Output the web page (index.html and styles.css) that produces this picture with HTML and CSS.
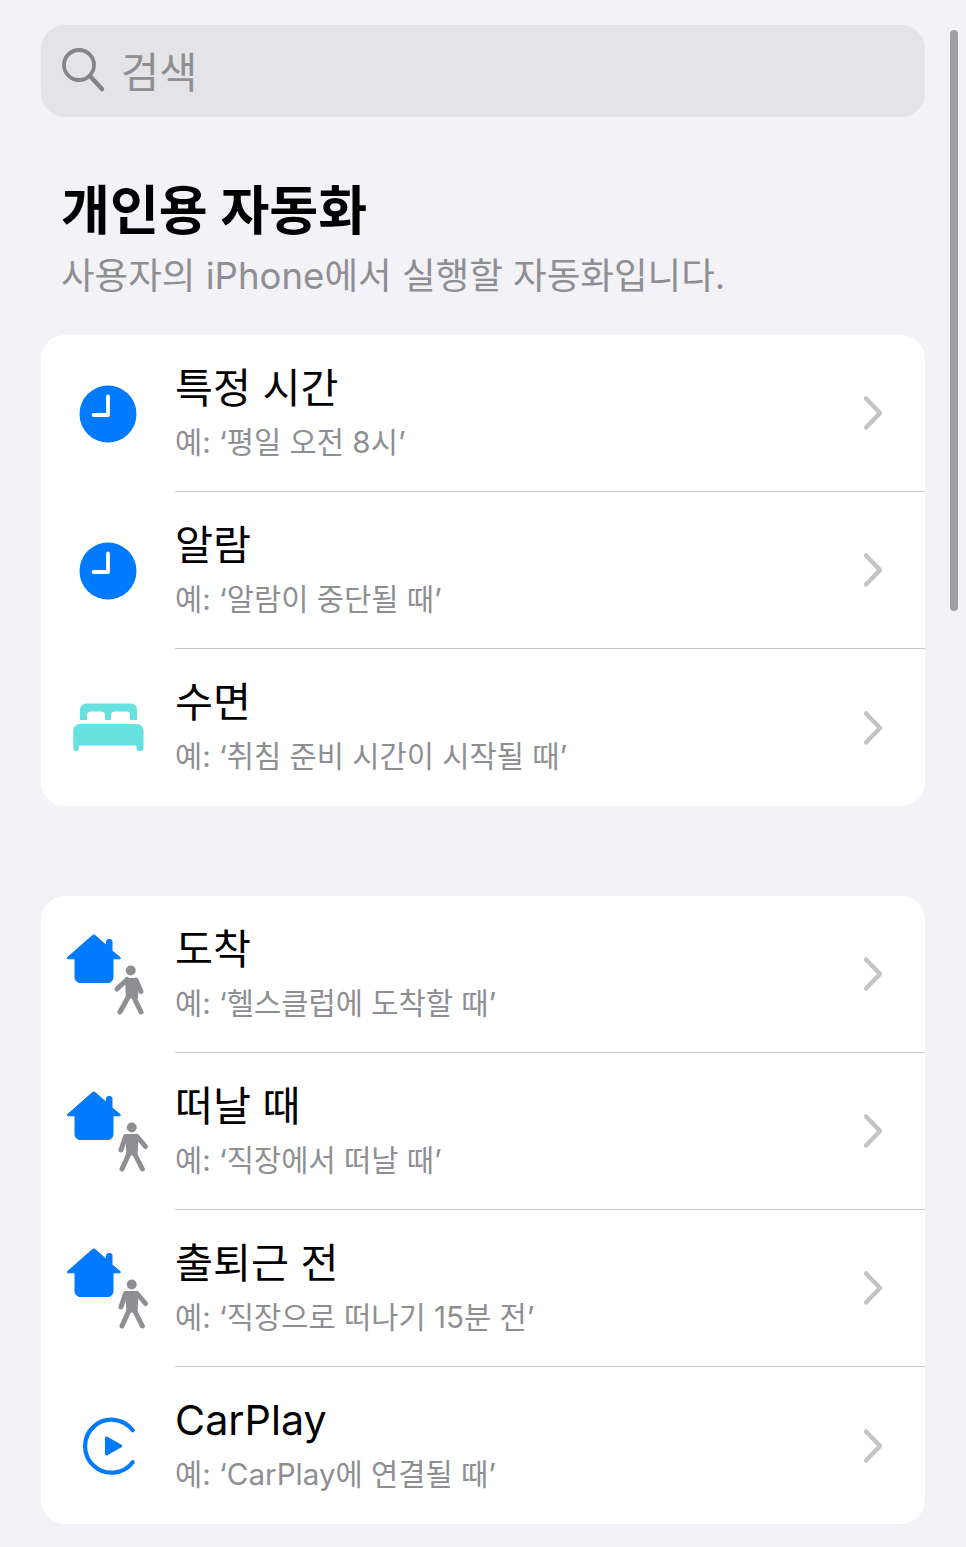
FILE: index.html
```html
<!DOCTYPE html>
<html lang="ko">

<head>
    <meta charset="UTF-8">
    <title>개인용 자동화</title>
    <link rel="stylesheet" href="styles.css">
</head>

<body>

    <svg class="sprites" width="0" height="0">
        <symbol id="clock" viewBox="78 384 60 60">
            <circle cx="108" cy="414" r="28.500" fill="#007aff" />
            <path d="M108 396.500V415H93.500" fill="none" stroke="#fff" stroke-width="3.800" stroke-linecap="round" stroke-linejoin="round" />
        </symbol>
        <symbol id="house" viewBox="63 929.500 90 90">
            <path d="M93.800 934.500a2 2 0 0 1 1.400.6L106.500 945V941a2 2 0 0 1 2-2h1.500a2 2 0 0 1 2 2v9.200l8.200 6.800v1.300h-7.200V977a5 5 0 0 1-5 5H80a5 5 0 0 1-5-5v-18.700H67.500V957L92.400 935.100a2 2 0 0 1 1.400-.6Z" fill="#007aff" stroke="#007aff" stroke-width="1" stroke-linejoin="round" />
        </symbol>
        <symbol id="walk-a" viewBox="63 929.500 90 90">
            <circle cx="130.700" cy="970" r="5" fill="#8e8e93" />
            <path d="M125.500 977.500H135.500Q138 977.500 138.800 980L138 998H126L125 980Z" fill="#8e8e93" />
            <path d="M127 979 117 988.500M136 979.500 141 991M128.500 996 120 1011.500M133.500 996 141 1011.500" fill="none" stroke="#8e8e93" stroke-width="5" stroke-linecap="round" stroke-linejoin="round" />
        </symbol>
        <symbol id="walk-b" viewBox="63 929.500 90 90">
            <circle cx="131.700" cy="970" r="5" fill="#8e8e93" />
            <path d="M125 976.500H136.500L138.500 980 137.500 998H126.500Z" fill="#8e8e93" />
            <path d="M125.500 979 121 992.500M137 979 145.500 989M129 996 122 1011.500M134.500 996 142.300 1011.500" fill="none" stroke="#8e8e93" stroke-width="5" stroke-linecap="round" stroke-linejoin="round" />
        </symbol>
        <symbol id="chevron" viewBox="0 0 24 36">
            <path d="M4 3.500 18 18 4 32.500" fill="none" stroke="#c4c4c7" stroke-width="4.500" stroke-linecap="round" stroke-linejoin="round" />
        </symbol>
    </svg>

    <div class="scrollbar"></div>

    <div class="search">
        <svg class="search-icon" viewBox="0 0 44 46">
            <circle cx="17" cy="17" r="15" fill="none" stroke="#858589" stroke-width="3.800" />
            <path d="M28 28 40 41" fill="none" stroke="#858589" stroke-width="4.500" stroke-linecap="round" />
        </svg>
        <span class="search-text">검색</span>
    </div>

    <div class="header">
        <h1>개인용 자동화</h1>
        <p>사용자의 iPhone에서 실행할 자동화입니다.</p>
    </div>

    <!-- 시간 / 수면 -->
    <div class="card">
        <div class="row">
            <div class="icon"><svg class="ic" viewBox="0 0 60 60"><use href="#clock" /></svg></div>
            <div class="row-body">
                <div class="texts">
                    <div class="row-title">특정 시간</div>
                    <div class="row-sub">예: ‘평일 오전 8시’</div>
                </div>
                <svg class="chevron"><use href="#chevron" /></svg>
            </div>
        </div>
        <div class="row">
            <div class="icon"><svg class="ic" viewBox="0 0 60 60"><use href="#clock" /></svg></div>
            <div class="row-body">
                <div class="texts">
                    <div class="row-title">알람</div>
                    <div class="row-sub">예: ‘알람이 중단될 때’</div>
                </div>
                <svg class="chevron"><use href="#chevron" /></svg>
            </div>
        </div>
        <div class="row">
            <div class="icon">
                <svg class="ic-bed" viewBox="73 703 71 49">
                    <path d="M85 703.500h46a6 6 0 0 1 6 6v10.500h-7v-5a3.500 3.500 0 0 0-3.500-3.500h-12a3.500 3.500 0 0 0-3.500 3.500v5h-6v-5a3.500 3.500 0 0 0-3.500-3.500h-11a3.500 3.500 0 0 0-3.500 3.500v5h-7v-10.500a6 6 0 0 1 6-6Z" fill="#67e0e0" />
                    <path d="M80 724h57a6.500 6.500 0 0 1 6.500 6.500V748a3 3 0 0 1-3 3h-1a3 3 0 0 1-3-3v-2.500H79v2.500a3 3 0 0 1-3 3h-.2a2.500 2.500 0 0 1-2.500-2.500V730.500A6.500 6.500 0 0 1 80 724Z" fill="#67e0e0" />
                </svg>
            </div>
            <div class="row-body last">
                <div class="texts">
                    <div class="row-title">수면</div>
                    <div class="row-sub">예: ‘취침 준비 시간이 시작될 때’</div>
                </div>
                <svg class="chevron"><use href="#chevron" /></svg>
            </div>
        </div>
    </div>

    <!-- 위치 / CarPlay -->
    <div class="card second">
        <div class="row">
            <div class="icon">
                <svg class="ic-place" viewBox="0 0 90 90">
                    <use href="#house" />
                    <use href="#walk-a" />
                </svg>
            </div>
            <div class="row-body">
                <div class="texts">
                    <div class="row-title">도착</div>
                    <div class="row-sub">예: ‘헬스클럽에 도착할 때’</div>
                </div>
                <svg class="chevron"><use href="#chevron" /></svg>
            </div>
        </div>
        <div class="row">
            <div class="icon">
                <svg class="ic-place" viewBox="0 0 90 90">
                    <use href="#house" />
                    <use href="#walk-b" />
                </svg>
            </div>
            <div class="row-body">
                <div class="texts">
                    <div class="row-title">떠날 때</div>
                    <div class="row-sub">예: ‘직장에서 떠날 때’</div>
                </div>
                <svg class="chevron"><use href="#chevron" /></svg>
            </div>
        </div>
        <div class="row">
            <div class="icon">
                <svg class="ic-place" viewBox="0 0 90 90">
                    <use href="#house" />
                    <use href="#walk-b" />
                </svg>
            </div>
            <div class="row-body">
                <div class="texts">
                    <div class="row-title">출퇴근 전</div>
                    <div class="row-sub">예: ‘직장으로 떠나기 15분 전’</div>
                </div>
                <svg class="chevron"><use href="#chevron" /></svg>
            </div>
        </div>
        <div class="row">
            <div class="icon">
                <svg class="ic" viewBox="78 1416.500 60 60">
                    <path d="M132.700 1430.700A26.500 26.500 0 1 0 132.700 1462.700" fill="none" stroke="#007aff" stroke-width="4.200" stroke-linecap="round" />
                    <path d="M105 1438.500a1.500 1.500 0 0 1 2.300-1.300L121.500 1445.200a1.500 1.500 0 0 1 0 2.600L107.300 1455.800a1.500 1.500 0 0 1-2.300-1.300Z" fill="#007aff" />
                </svg>
            </div>
            <div class="row-body last">
                <div class="texts">
                    <div class="row-title">CarPlay</div>
                    <div class="row-sub">예: ‘CarPlay에 연결될 때’</div>
                </div>
                <svg class="chevron"><use href="#chevron" /></svg>
            </div>
        </div>
    </div>

</body>

</html>
```

FILE: styles.css
```css
html,
body {
    height: 1547px;
    overflow: hidden;
}

body {
    position: relative;
    margin: 0;
    padding: 25px 41px 0 41px;
    box-sizing: border-box;
    background-color: #f2f2f7;
    font-family: Inter, "Noto Sans CJK KR", sans-serif;
    color: #000;
}

.sprites {
    position: absolute;
}

.scrollbar {
    position: absolute;
    left: 950px;
    top: 30px;
    width: 8px;
    height: 581px;
    border-radius: 4px;
    background-color: #a0a0a3;
}

.search {
    display: flex;
    align-items: center;
    height: 92px;
    padding-left: 21px;
    border-radius: 24px;
    background-color: #e3e3e8;
}

.search-icon {
    width: 44px;
    height: 46px;
}

.search-text {
    margin-left: 15px;
    padding-top: 3px;
    font-size: 41.500px;
    line-height: 50px;
    color: #8e8e93;
}

.header {
    height: 218px;
    padding: 62px 0 0 20px;
    box-sizing: border-box;
}

h1 {
    margin: 0;
    font-size: 53.200px;
    line-height: 64px;
    font-weight: 700;
}

.header p {
    margin: 10px 0 0;
    font-size: 36.550px;
    line-height: 46px;
    color: #8e8e93;
}

.card {
    border-radius: 24px;
    background-color: #fff;
}

.card.second {
    margin-top: 90px;
}

.row {
    display: flex;
    height: 157px;
}

.icon {
    display: flex;
    align-items: center;
    justify-content: center;
    flex: none;
    width: 134px;
}

.ic {
    width: 60px;
    height: 60px;
}

.ic-bed {
    width: 71px;
    height: 49px;
}

.ic-place {
    width: 90px;
    height: 90px;
}

.row-body {
    display: flex;
    flex: 1;
    align-items: center;
    justify-content: space-between;
    padding-right: 39px;
    border-bottom: 1px solid #c8c8ca;
}

.row-body.last {
    border-bottom: none;
}

.texts {
    padding-bottom: 2px;
}

.row-title {
    font-size: 41.300px;
    line-height: 48px;
}

.row-sub {
    margin-top: 8px;
    padding-top: 3px;
    font-size: 29.600px;
    line-height: 38px;
    color: #8e8e93;
}

.chevron {
    width: 24px;
    height: 36px;
}
```
